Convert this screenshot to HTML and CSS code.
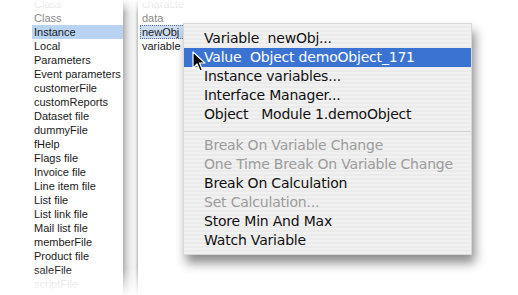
FILE: index.html
```html
<!DOCTYPE html>
<html lang="en">
	<head>
		<meta charset="UTF-8" />
		<title>Data Viewer menu</title>
		<link rel="stylesheet" href="styles.css">
	</head>
	<body>
		<div class="screen">
			<div class="lists">
				<div class="list list-main">
					<div class="row faint">Class</div>
					<div class="row dim">Class</div>
					<div class="row selected">Instance</div>
					<div class="row">Local</div>
					<div class="row">Parameters</div>
					<div class="row">Event parameters</div>
					<div class="row">customerFile</div>
					<div class="row">customReports</div>
					<div class="row">Dataset file</div>
					<div class="row">dummyFile</div>
					<div class="row">fHelp</div>
					<div class="row">Flags file</div>
					<div class="row">Invoice file</div>
					<div class="row">Line item file</div>
					<div class="row">List file</div>
					<div class="row">List link file</div>
					<div class="row">Mail list file</div>
					<div class="row">memberFile</div>
					<div class="row">Product file</div>
					<div class="row">saleFile</div>
					<div class="row faint">scriptFile</div>
				</div>
				<div class="gutter"></div>
				<div class="list list-vars">
					<div class="row faint">characte</div>
					<div class="row dim">data</div>
					<div class="row focused">newObj</div>
					<div class="row">variable</div>
				</div>
			</div>

			<div class="menu">
				<div class="item">Variable&nbsp;&nbsp;newObj...</div>
				<div class="item active">Value&nbsp;&nbsp;Object demoObject_171</div>
				<div class="item">Instance variables...</div>
				<div class="item">Interface Manager...</div>
				<div class="item">Object&nbsp;&nbsp;&nbsp;Module 1.demoObject</div>
				<div class="separator"></div>
				<div class="item disabled">Break On Variable Change</div>
				<div class="item disabled">One Time Break On Variable Change</div>
				<div class="item">Break On Calculation</div>
				<div class="item disabled">Set Calculation...</div>
				<div class="item">Store Min And Max</div>
				<div class="item">Watch Variable</div>
			</div>

			<svg class="cursor" width="14" height="22" viewBox="0 0 14 22">
				<path d="M1 1 L1 17 L5 13 L8 20 L10.5 19 L7.5 12 L13 12 Z" fill="#000" stroke="#fff" stroke-width="1.2" stroke-linejoin="round"/>
			</svg>

			<div class="fade"></div>
		</div>
	</body>
</html>
```

FILE: styles.css
```css
body {
	margin: 0;
	padding: 0;
	background: #fff;
	font-family: 'DejaVu Sans', sans-serif;
}

.screen {
	position: relative;
	width: 518px;
	height: 295px;
	overflow: hidden;
	background: #fff;
}

.lists {
	display: flex;
	height: 100%;
	padding-left: 32px;
}

.list {
	background: #fff;
	margin-top: -3px;
	font-family: 'Liberation Sans', Arial, sans-serif;
}

.list-main {
	width: 91px;
}

.list-vars {
	width: 45px;
	border-left: 1px solid #c8c8c8;
	padding-left: 2px;
}

.gutter {
	width: 14px;
	background: linear-gradient(to right, #b0b0b0 0, #cfcfcf 3px, #eaeaea 7px, #f4f4f4 12px, #d0d0d0 14px);
}

.row {
	height: 14px;
	line-height: 14px;
	font-size: 11px;
	color: #1a1a1a;
	padding-left: 2px;
	white-space: nowrap;
	overflow: hidden;
}

.row.dim {
	color: #8a8a8a;
}

.row.faint {
	color: #d4d4d4;
}

.row.selected {
	background: #b9d3f3;
}

.row.focused {
	background: #cbdcf4;
	outline: 1px dotted #5a6fa0;
	outline-offset: -1px;
}

.menu {
	position: absolute;
	left: 183px;
	top: 23px;
	width: 287px;
	padding: 5px 0 4px;
	background: repeating-linear-gradient(to bottom, #f1f1f1 0, #f1f1f1 2px, #ebebeb 2px, #ebebeb 4px);
	border: 1px solid #d8d8d8;
	box-shadow: 3px 8px 10px rgba(0, 0, 0, 0.45);
}

.item {
	height: 19px;
	line-height: 19px;
	font-size: 14px;
	letter-spacing: -0.2px;
	padding-left: 20px;
	color: #111;
	white-space: nowrap;
}

.item.active {
	background: #3a73d2;
	color: #fff;
}

.item.disabled {
	color: #9c9c9c;
}

.separator {
	height: 1px;
	background: #d4d4d4;
	margin: 7px 0 4px;
}

.cursor {
	position: absolute;
	left: 192px;
	top: 51px;
}

.fade {
	position: absolute;
	inset: 0;
	pointer-events: none;
	background:
		linear-gradient(to bottom, rgba(255, 255, 255, 0.9) 0, rgba(255, 255, 255, 0) 14px),
		linear-gradient(to top, rgba(255, 255, 255, 0.95) 0, rgba(255, 255, 255, 0) 26px),
		linear-gradient(to right, rgba(255, 255, 255, 1) 0, rgba(255, 255, 255, 0) 34px);
}
```
